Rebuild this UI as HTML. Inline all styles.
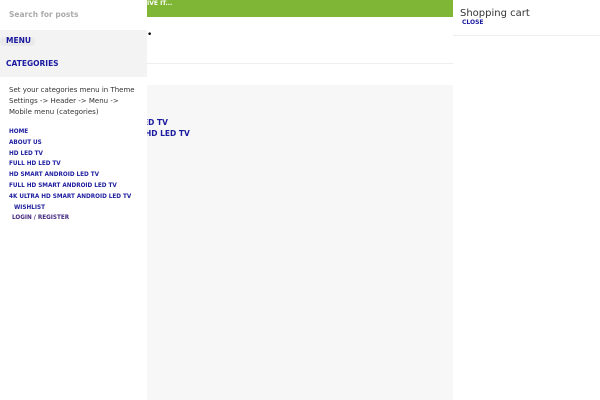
<html><head><style>
body{margin:0;width:600px;height:400px;position:relative;overflow:hidden;background:#fff;font-family:"DejaVu Sans","Liberation Sans",sans-serif}
.a{position:absolute}
.b{font-weight:bold;color:#1a1aa0;text-transform:uppercase}
.m a{display:block;font-size:5.7px;font-weight:bold;color:#2020a0;height:10.8px;line-height:10.8px;text-transform:uppercase;white-space:nowrap}
</style></head><body>
<div class="a" style="left:147px;top:0;width:306px;height:17px;background:#80b636"></div>
<div class="a" style="left:147px;top:0;font-size:6px;color:#fff;font-weight:bold">IVE IT...</div>
<div class="a" style="left:147px;top:30px;font-size:9px">•</div>
<div class="a" style="left:147px;top:63px;width:306px;height:1px;background:#eee"></div>
<div class="a" style="left:147px;top:85px;width:306px;height:315px;background:#f7f7f7"></div>
<div class="a b" style="left:147px;top:117px;font-size:7.5px;line-height:11px;width:60px;overflow:hidden"><div style="margin-left:-4px">ED TV</div><div style="margin-left:-2px">HD LED TV</div></div>
<div class="a" style="left:0;top:0;width:147px;height:400px;background:#fff">
<div class="a" style="left:9px;top:10px;font-size:7.5px;color:#aaa;font-weight:bold">Search for posts</div>
<div class="a" style="left:0;top:30px;width:147px;height:47px;background:#f3f3f3"></div>
<div class="a" style="left:0;top:37px;width:35px;height:9px;background:#eaeaea;border-radius:4px"></div>
<div class="a b" style="left:6px;top:36px;font-size:7.5px">Menu</div>
<div class="a b" style="left:6px;top:59px;font-size:7.5px">Categories</div>
<div class="a" style="left:9px;top:85px;font-size:7px;line-height:11px;color:#333;width:128px">Set your categories menu in Theme Settings -&gt; Header -&gt; Menu -&gt; Mobile menu (categories)</div>
<div class="a m" style="left:9px;top:127px"><a>Home</a><a>About us</a><a>HD LED TV</a><a>Full HD LED TV</a><a>HD Smart Android LED TV</a><a>Full HD Smart Android LED TV</a><a>4K Ultra HD Smart Android LED TV</a><a style="margin-left:5px">Wishlist</a><a style="margin-left:3px;color:#442a80">Login / Register</a></div>
</div>
<div class="a" style="left:453px;top:0;width:147px;height:400px;background:#fff">
<div class="a" style="left:7px;top:8px;font-size:10px;color:#333">Shopping cart</div>
<div class="a b" style="left:9px;top:19px;font-size:6px">Close</div>
<div class="a" style="left:0;top:35px;width:147px;height:1px;background:#eee"></div>
</div>
</body></html>
